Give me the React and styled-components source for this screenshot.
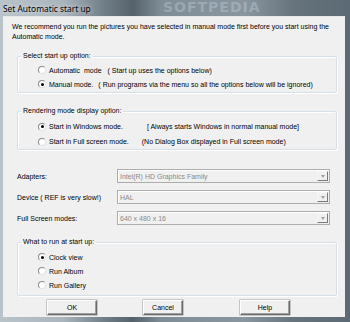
import React from 'react';
import styled, { createGlobalStyle } from 'styled-components';

const GlobalStyle = createGlobalStyle`
  html, body {
    margin: 0;
    padding: 0;
    background: #5f7884;
  }
  * {
    box-sizing: border-box;
  }
`;

const Frame = styled.div`
  width: 350px;
  height: 322px;
  display: flex;
  flex-direction: column;
  padding: 0 5px 5px 3px;
  background: linear-gradient(
    90deg,
    #b9c3ca 0%,
    #aab5bd 18%,
    #6f7d87 30%,
    #55626c 38%,
    #7f8d97 46%,
    #8996a0 70%,
    #66737c 84%,
    #5b6a74 100%
  );
  font-family: 'Liberation Sans', Arial, sans-serif;
`;

const TitleBar = styled.div`
  height: 16px;
  display: flex;
  align-items: center;
  position: relative;
  overflow: hidden;
`;

const Title = styled.span`
  font-family: 'Noto Sans', 'Open Sans', sans-serif;
  font-size: 8.4px;
  color: #000;
  text-shadow: 0 0 4px rgba(255, 255, 255, 0.9);
  white-space: nowrap;
`;

const Watermark = styled.span`
  position: absolute;
  left: 160px;
  top: 0;
  line-height: 15px;
  font-family: 'DejaVu Sans', sans-serif;
  font-weight: bold;
  font-size: 14px;
  letter-spacing: 1px;
  color: rgba(200, 210, 218, 0.4);
`;

const Client = styled.div`
  flex: 1;
  background: #f0f0f0;
  border-top: 1px solid #e4e8ea;
  padding: 5px 9px 0 9px;
  font-size: 7px;
  color: #000;
`;

const Intro = styled.p`
  margin: 0;
  line-height: 10px;
  white-space: nowrap;
`;

const Group = styled.fieldset`
  margin: ${({ $top }) => $top}px 0 0 5px;
  width: 320px;
  padding: 0;
  border: 1px solid #d5dfe5;
  border-radius: 2px;
  box-shadow: inset 1px 1px 0 #fff, 1px 1px 0 #fff;
  min-inline-size: 0;
`;

const Legend = styled.legend`
  margin-left: 3px;
  padding: 0 2px;
  line-height: 10px;
  font-size: 7px;
`;

const RadioList = styled.div`
  padding: ${({ $padTop }) => $padTop}px 0 ${({ $padBottom }) => $padBottom}px 20px;
`;

const RadioRow = styled.div`
  height: ${({ $h }) => $h}px;
  display: flex;
  align-items: center;
  white-space: nowrap;
`;

const RadioCircle = styled.span`
  width: 8px;
  height: 8px;
  border-radius: 50%;
  border: 1px solid;
  border-color: #8c8c8c #e2e2e2 #e2e2e2 #8c8c8c;
  background: #fff;
  display: flex;
  align-items: center;
  justify-content: center;
  margin-right: 3px;
  flex-shrink: 0;

  &::after {
    content: '';
    width: 3px;
    height: 3px;
    border-radius: 50%;
    background: ${({ $on }) => ($on ? '#000' : 'transparent')};
  }
`;

const Note = styled.span`
  margin-left: ${({ $gap }) => $gap}px;
`;

const Fields = styled.div`
  margin: 19px 0 0 5px;
  display: flex;
  flex-direction: column;
  gap: 7px;
`;

const FieldRow = styled.div`
  height: 14px;
  display: flex;
  align-items: center;
`;

const FieldLabel = styled.span`
  width: 100px;
  white-space: nowrap;
`;

const Combo = styled.div`
  width: 213px;
  height: 14px;
  border: 1px solid #adadad;
  box-shadow: inset 1px 1px 0 #fff;
  background: #f0f0f0;
  display: flex;
  align-items: center;
  justify-content: space-between;
  padding: 0 1px 0 2px;
  color: #8a8a8a;
`;

const DropButton = styled.span`
  width: 11px;
  height: 10px;
  border: 1px solid;
  border-color: #f7f7f7 #7a7a7a #7a7a7a #f7f7f7;
  display: flex;
  align-items: center;
  justify-content: center;

  &::after {
    content: '';
    border-left: 2.5px solid transparent;
    border-right: 2.5px solid transparent;
    border-top: 3px solid #a0a0a0;
  }
`;

const Buttons = styled.div`
  display: flex;
  margin-top: 4px;
`;

const Button = styled.button`
  margin-left: ${({ $left }) => $left}px;
  width: ${({ $w }) => $w}px;
  height: 15px;
  padding: 0;
  font-family: 'Liberation Sans', Arial, sans-serif;
  font-size: 7px;
  color: #000;
  background: #f0f0f0;
  border: 1px solid;
  border-color: #fff #6a6a6a #6a6a6a #fff;
  box-shadow: inset -1px -1px 0 #a0a0a0, 0 0 0 0.5px #9a9a9a;
`;

const Radio = ({ on, h, children }) => (
  <RadioRow $h={h}>
    <RadioCircle $on={on} />
    {children}
  </RadioRow>
);

const Field = ({ label, value }) => (
  <FieldRow>
    <FieldLabel>{label}</FieldLabel>
    <Combo>
      <span>{value}</span>
      <DropButton />
    </Combo>
  </FieldRow>
);

export default function App() {
  return (
    <>
      <GlobalStyle />
      <Frame>
        <TitleBar>
          <Title>Set Automatic start up</Title>
          <Watermark>SOFTPEDIA</Watermark>
        </TitleBar>
        <Client>
          <Intro>
            We recommend you run the pictures you have selected in manual mode first before you start using the
            <br />
            Automatic mode.
          </Intro>

          <Group $top={9}>
            <Legend>Select start up option:</Legend>
            <RadioList $padTop={2} $padBottom={1}>
              <Radio h={14}>
                Automatic&nbsp; mode<Note $gap={6}>( Start up uses the options below)</Note>
              </Radio>
              <Radio h={14} on>
                Manual mode.<Note $gap={5}>( Run programs via the menu so all the options below will be ignored)</Note>
              </Radio>
            </RadioList>
          </Group>

          <Group $top={13}>
            <Legend>Rendering mode display option:</Legend>
            <RadioList $padTop={3} $padBottom={0}>
              <Radio h={15} on>
                Start in Windows mode.<Note $gap={24}>[ Always starts Windows in normal manual mode]</Note>
              </Radio>
              <Radio h={15}>
                Start in Full screen mode.<Note $gap={13}>(No Dialog Box displayed in Full screen mode)</Note>
              </Radio>
            </RadioList>
          </Group>

          <Fields>
            <Field label="Adapters:" value="Intel(R) HD Graphics Family" />
            <Field label="Device  ( REF is very slow!)" value="HAL" />
            <Field label="Full  Screen modes:" value="640 x 480 x 16" />
          </Fields>

          <Group $top={12}>
            <Legend>What to run at start up:</Legend>
            <RadioList $padTop={3} $padBottom={3}>
              <Radio h={14} on>Clock view</Radio>
              <Radio h={14}>Run Album</Radio>
              <Radio h={14}>Run Gallery</Radio>
            </RadioList>
          </Group>

          <Buttons>
            <Button $left={35} $w={50}>OK</Button>
            <Button $left={46} $w={40}>Cancel</Button>
            <Button $left={57} $w={50}>Help</Button>
          </Buttons>
        </Client>
      </Frame>
    </>
  );
}
